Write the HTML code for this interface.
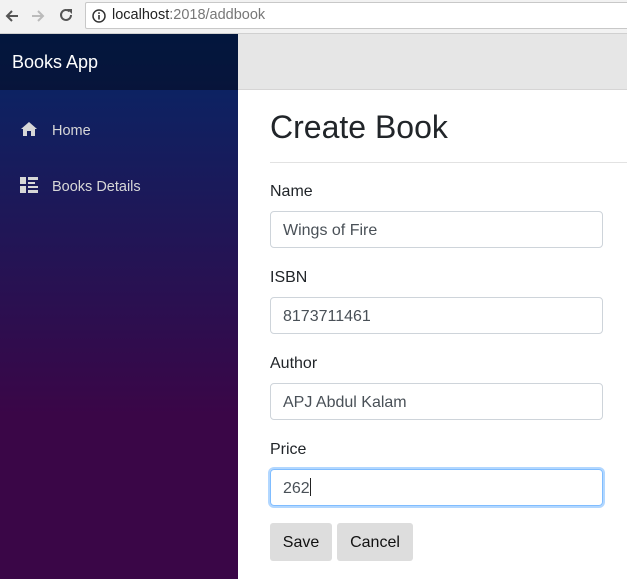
<!DOCTYPE html>
<html><head><style>
*{box-sizing:border-box;margin:0;padding:0}
body{width:627px;height:579px;overflow:hidden;font-family:"Liberation Sans",sans-serif;background:#fff;position:relative}
.chrome{position:absolute;left:0;top:0;width:627px;height:34px;background:#f2f2f2;border-bottom:1px solid #d0d0d0}
.url{position:absolute;left:85px;top:2px;width:560px;height:27px;background:#fff;border:1px solid #c8c8c8;border-radius:2px;font-size:14.5px;line-height:25px;padding-left:26px;color:#222}
.url span{color:#777}
.side{position:absolute;left:0;top:34px;width:238px;height:545px;background:linear-gradient(180deg,rgb(5,39,103) 0%,#3a0647 70%)}
.brand{height:56px;background:rgba(0,0,0,.4);color:#fff;font-size:18px;line-height:56px;padding-left:12px}
.nav{position:absolute;left:20px;color:#d7d7d7;font-size:14.5px}
.top{position:absolute;left:238px;top:34px;width:389px;height:56px;background:#e6e6e6;border-bottom:1px solid #d6d5d5}
h1{position:absolute;left:270px;top:109px;font-size:32px;font-weight:400;color:#212529}
.hr{position:absolute;left:270px;top:162px;width:357px;height:1px;background:#e2e2e2}
label{position:absolute;left:270px;font-size:16px;color:#212529}
.in{position:absolute;left:270px;width:333px;height:37px;border:1px solid #ced4da;border-radius:4px;font-size:16px;line-height:37px;padding-left:12px;color:#495057}
.focus{border-color:#80bdff;box-shadow:0 0 0 2px rgba(0,123,255,.3)}
.cur{display:inline-block;width:1px;height:18px;background:#222;vertical-align:-3px}
.btn{position:absolute;top:523px;height:38px;background:#ddd;border-radius:3px;font-size:16px;line-height:39px;text-align:center;color:#111}
</style></head><body>
<div class="chrome">
<svg style="position:absolute;left:4px;top:8px" width="16" height="16" viewBox="0 0 16 16"><path d="M14 8H3M8 3L3 8l5 5" stroke="#555" stroke-width="2" fill="none"/></svg>
<svg style="position:absolute;left:30px;top:8px" width="16" height="16" viewBox="0 0 16 16"><path d="M2 8h11M8 3l5 5-5 5" stroke="#bbb" stroke-width="2" fill="none"/></svg>
<svg style="position:absolute;left:58px;top:7px" width="16" height="16" viewBox="0 0 16 16"><path d="M13 8a5 5 0 1 1-1.5-3.6" stroke="#555" stroke-width="2" fill="none"/><path d="M9 2h5v5z" fill="#555"/></svg>
<div class="url"><svg style="position:absolute;left:6px;top:6px" width="14" height="14" viewBox="0 0 14 14"><circle cx="7" cy="7" r="6" stroke="#333" stroke-width="1.5" fill="none"/><rect x="6.2" y="6" width="1.6" height="4.5" fill="#333"/><rect x="6.2" y="3.3" width="1.6" height="1.6" fill="#333"/></svg>localhost<span>:2018/addbook</span></div>
</div>
<div class="side"><div class="brand">Books App</div>
<svg style="position:absolute;left:20px;top:87px" width="18" height="16" viewBox="0 0 18 16"><path d="M9 1L1 8h2v7h4v-5h4v5h4V8h2z" fill="#d7d7d7"/></svg>
<div class="nav" style="left:52px;top:89px">Home</div>
<svg style="position:absolute;left:20px;top:143px" width="19" height="16" viewBox="0 0 19 16"><rect x="0" y="0" width="6" height="7" fill="#d7d7d7"/><rect x="0" y="9" width="6" height="7" fill="#d7d7d7"/><rect x="8" y="0" width="10" height="3" fill="#d7d7d7"/><rect x="8" y="5" width="7" height="2" fill="#d7d7d7"/><rect x="8" y="9" width="10" height="2" fill="#d7d7d7"/><rect x="8" y="13" width="10" height="3" fill="#d7d7d7"/></svg>
<div class="nav" style="left:52px;top:145px">Books Details</div>
</div>
<div class="top"></div>
<h1>Create Book</h1><div class="hr"></div>
<label style="top:183px">Name</label><div class="in" style="top:211px">Wings of Fire</div>
<label style="top:269px">ISBN</label><div class="in" style="top:297px">8173711461</div>
<label style="top:355px">Author</label><div class="in" style="top:383px">APJ Abdul Kalam</div>
<label style="top:441px">Price</label><div class="in focus" style="top:469px">262<span class="cur"></span></div>
<div class="btn" style="left:270px;width:62px">Save</div>
<div class="btn" style="left:337px;width:76px">Cancel</div>
</body></html>
